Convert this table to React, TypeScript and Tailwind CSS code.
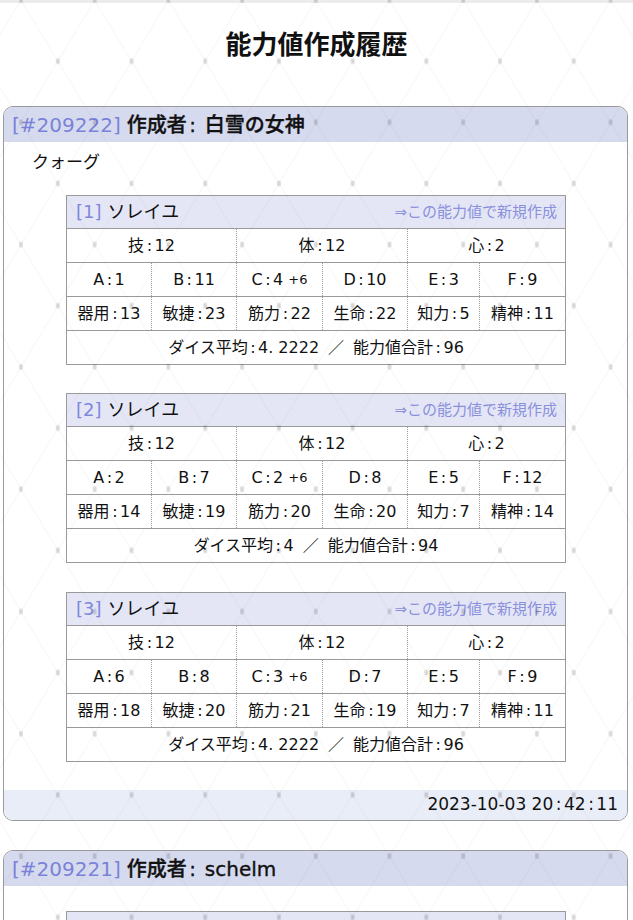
import React from "react";

const FONT = "font-['DejaVu_Sans','Noto_Sans_CJK_JP',sans-serif]";

type Sheet = {
  no: number;
  name: string;
  gi: number;
  tai: number;
  shin: number;
  ab: [string, number][];
  cPlus: number;
  st: [string, number][];
  avg: string;
  total: number;
};

function Colon() {
  return <span className="mx-[2.5px]">:</span>;
}

function Kv({ k, v, extra }: { k: string; v: React.ReactNode; extra?: string }) {
  return (
    <>
      {k}
      <Colon />
      {v}
      {extra && <span className="ml-[5px] text-[13px]">{extra}</span>}
    </>
  );
}

function Avg({ v }: { v: string }) {
  const parts = v.split(".");
  if (parts.length === 1) return <>{v}</>;
  return (
    <>
      {parts[0]}
      <span className="mr-[5px]">.</span>
      {parts[1]}
    </>
  );
}

function SheetTable({ s, className }: { s: Sheet; className?: string }) {
  const row = "flex items-center justify-center h-[34px] border-t border-solid border-[#9a9a9a]";
  return (
    <div className={`w-[500px] ml-[62px] border border-[#9a9a9a] bg-white/40 ${className ?? ""}`}>
      <div className="h-[32px] bg-[#e4e6f6] flex items-center justify-between pl-[9px] pr-[8px]">
        <div className="text-[18px] leading-none">
          <span className="text-[#7f88dc]">[{s.no}]</span>
          <span className="ml-[6px] text-[#111]">{s.name}</span>
        </div>
        <div className="text-[15px] text-[#8a90dc] leading-none">⇒この能力値で新規作成</div>
      </div>
      <div className="grid grid-cols-[84px_85px_86px_85px_72px_86px] text-[16px] text-[#111]">
        <div className={`${row} col-span-2`}>
          <Kv k="技" v={s.gi} />
        </div>
        <div className={`${row} col-span-2 [border-left:1px_dotted_#9a9a9a]`}>
          <Kv k="体" v={s.tai} />
        </div>
        <div className={`${row} col-span-2 [border-left:1px_dotted_#9a9a9a]`}>
          <Kv k="心" v={s.shin} />
        </div>
        {s.ab.map(([k, v], i) => (
          <div key={k} className={`${row} ${i > 0 ? "[border-left:1px_dotted_#9a9a9a]" : ""}`}>
            <Kv k={k} v={v} extra={k === "C" ? `+${s.cPlus}` : undefined} />
          </div>
        ))}
        {s.st.map(([k, v], i) => (
          <div key={k} className={`${row} ${i > 0 ? "[border-left:1px_dotted_#9a9a9a]" : ""}`}>
            <Kv k={k} v={v} />
          </div>
        ))}
        <div className={`${row} col-span-6`}>
          ダイス平均
          <Colon />
          <Avg v={s.avg} />
          <span className="mx-[9px]">／</span>能力値合計
          <Colon />
          {s.total}
        </div>
      </div>
    </div>
  );
}

function mk(
  no: number,
  name: string,
  ab: number[],
  c: number,
  st: number[],
  avg: string,
  total: number
): Sheet {
  const abK = ["A", "B", "C", "D", "E", "F"];
  const stK = ["器用", "敏捷", "筋力", "生命", "知力", "精神"];
  return {
    no,
    name,
    gi: 12,
    tai: 12,
    shin: 2,
    ab: abK.map((k, i) => [k, ab[i]] as [string, number]),
    cPlus: c,
    st: stK.map((k, i) => [k, st[i]] as [string, number]),
    avg,
    total,
  };
}

const sheets1: Sheet[] = [
  mk(1, "ソレイユ", [1, 11, 4, 10, 3, 9], 6, [13, 23, 22, 22, 5, 11], "4.2222", 96),
  mk(2, "ソレイユ", [2, 7, 2, 8, 5, 12], 6, [14, 19, 20, 20, 7, 14], "4", 94),
  mk(3, "ソレイユ", [6, 8, 3, 7, 5, 9], 6, [18, 20, 21, 19, 7, 11], "4.2222", 96),
];

const sheets2: Sheet[] = [
  mk(1, "エートエル", [4, 9, 5, 8, 6, 10], 0, [13, 17, 13, 16, 18, 22], "4", 99),
];

function Card({
  id,
  author,
  memo,
  sheets,
  date,
  className,
  bodyPt,
}: {
  id: number;
  author: string;
  memo?: string;
  sheets: Sheet[];
  date: string;
  className?: string;
  bodyPt: string;
}) {
  return (
    <div
      className={`ml-[3px] w-[625px] border border-[#9a9a9a] rounded-[10px] overflow-hidden bg-white/30 ${className ?? ""}`}
    >
      <div className="h-[35px] bg-[#d6daef] flex items-center pl-[8px] text-[20px] leading-none">
        <span className="text-[#7a83d8]">[#{id}]</span>
        <span className="ml-[6px] font-medium text-[#111] [-webkit-text-stroke:0.35px_#111]">
          作成者<Colon /> {author}
        </span>
      </div>
      <div className={`${bodyPt} pb-[28px]`}>
        {memo && <div className="ml-[28px] text-[17px] leading-[24px] text-[#111]">{memo}</div>}
        {sheets.map((s, i) => (
          <SheetTable
            key={s.no}
            s={s}
            className={i === 0 ? (memo ? "mt-[21px]" : "") : i === 1 ? "mt-[28px]" : "mt-[29px]"}
          />
        ))}
      </div>
      <div className="h-[30px] bg-[#e9edf7] flex items-center justify-end pr-[9px] text-[17px] text-[#111]">
        {date.split(":").map((p, i) => (
          <React.Fragment key={i}>
            {i > 0 && <Colon />}
            {p}
          </React.Fragment>
        ))}
      </div>
    </div>
  );
}

function Pattern() {
  const dot = "rgba(0,0,0,0.13)";
  const ln = "rgba(0,0,0,0.03)";
  return (
    <svg className="pointer-events-none absolute inset-0 z-10" width="100%" height="100%">
      <defs>
        <pattern id="lat" x="21" y="0" width="73.7" height="122.3" patternUnits="userSpaceOnUse">
          <line x1="0" y1="0" x2="73.7" y2="122.3" stroke={ln} strokeWidth="1" />
          <line x1="73.7" y1="0" x2="0" y2="122.3" stroke={ln} strokeWidth="1" />
          <ellipse cx="0" cy="0" rx="2" ry="3" fill={dot} />
          <ellipse cx="73.7" cy="0" rx="2" ry="3" fill={dot} />
          <ellipse cx="0" cy="122.3" rx="2" ry="3" fill={dot} />
          <ellipse cx="73.7" cy="122.3" rx="2" ry="3" fill={dot} />
          <ellipse cx="36.85" cy="61.15" rx="2" ry="3" fill={dot} />
        </pattern>
      </defs>
      <rect width="100%" height="100%" fill="url(#lat)" />
    </svg>
  );
}

export default function App() {
  return (
    <div className={`relative w-[633px] min-h-[920px] bg-white overflow-hidden ${FONT}`}>
      <div className="h-[3px] bg-[#ececec]" />
      <div className="h-[103px] pt-[20px]">
        <h1 className="text-center text-[26px] leading-[40px] font-bold text-[#111] font-['Noto_Sans_CJK_JP',sans-serif]">
          能力値作成履歴
        </h1>
      </div>
      <Card
        id={209222}
        author="白雪の女神"
        memo="クォーグ"
        sheets={sheets1}
        date="2023-10-03 20:42:11"
        bodyPt="pt-[8px]"
      />
      <Card
        id={209221}
        author="schelm"
        sheets={sheets2}
        date="2023-10-03 20:30:05"
        className="mt-[29px]"
        bodyPt="pt-[25px]"
      />
      <div className="h-[40px]" />
      <Pattern />
    </div>
  );
}
